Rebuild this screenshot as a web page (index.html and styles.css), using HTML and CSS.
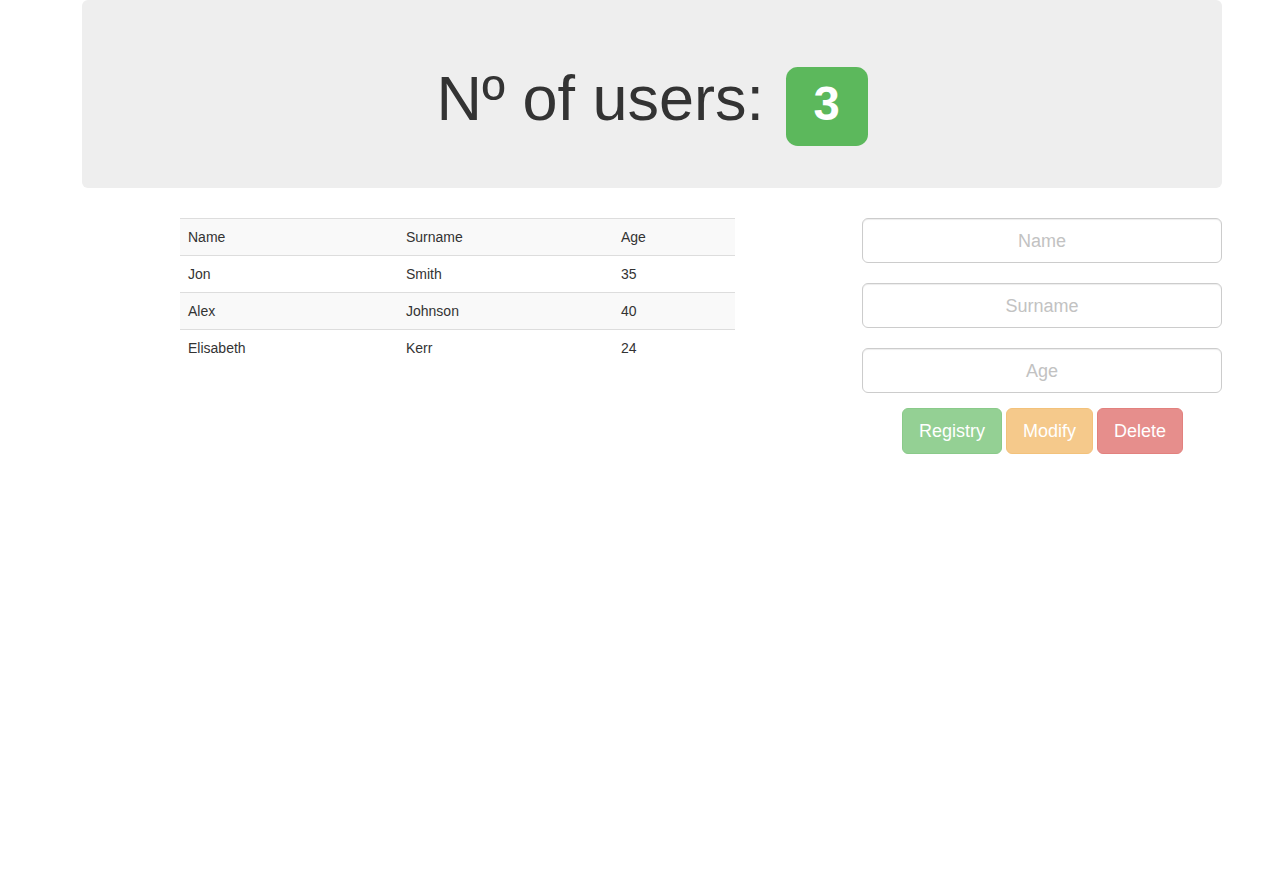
FILE: index.html
```html
<!DOCTYPE html>
<html>
<head>
<meta charset="utf-8">
<link rel="stylesheet" href="styles.css">
</head>
<body>
<div class="page">
  <div class="jumbotron">
    <h1 class="title">Nº of users: <span class="label">3</span></h1>
  </div>
  <div class="row">
    <div class="col-table">
      <table class="table">
        <tbody>
          <tr><td class="c1">Name</td><td class="c2">Surname</td><td class="c3">Age</td></tr>
          <tr><td>Jon</td><td>Smith</td><td>35</td></tr>
          <tr><td>Alex</td><td>Johnson</td><td>40</td></tr>
          <tr><td>Elisabeth</td><td>Kerr</td><td>24</td></tr>
        </tbody>
      </table>
    </div>
    <div class="col-form">
      <input class="input" type="text" placeholder="Name">
      <input class="input" type="text" placeholder="Surname">
      <input class="input" type="text" placeholder="Age">
      <div class="buttons">
        <button class="btn btn-success">Registry</button>
        <button class="btn btn-warning">Modify</button>
        <button class="btn btn-danger">Delete</button>
      </div>
    </div>
  </div>
</div>
</body>
</html>
```

FILE: styles.css
```css
* { box-sizing: border-box; }
html, body { margin: 0; padding: 0; background: #fff; }
body {
  font-family: "Liberation Sans", Arial, sans-serif;
  font-size: 14px;
  line-height: 1.42857;
  color: #333;
}
.page {
  width: 1140px;
  margin-left: 82px;
}
.jumbotron {
  background: #eee;
  border-radius: 6px;
  height: 188px;
  padding: 48px 60px 0;
  margin-bottom: 30px;
  text-align: center;
}
.title {
  margin: 16px 0 0;
  font-size: 63px;
  line-height: 1.1;
  font-weight: 500;
  color: #333;
}
.label {
  display: inline;
  font-size: 75%;
  font-weight: bold;
  line-height: 1;
  color: #fff;
  background: #5cb85c;
  padding: .22em .59em .34em;
  border-radius: .25em;
  vertical-align: baseline;
  margin-left: 4px;
}
.row {
  display: flex;
}
.col-table {
  width: 555px;
  margin-left: 98px;
}
.col-form {
  width: 360px;
  margin-left: 127px;
  display: flex;
  flex-direction: column;
  gap: 20px;
}
.table {
  width: 555px;
  border-collapse: collapse;
  border-spacing: 0;
}
.table td {
  padding: 8px;
  line-height: 20px;
  border-top: 1px solid #ddd;
  text-align: left;
  vertical-align: top;
}
.table tr:nth-child(odd) td { background: #f9f9f9; }
.c1 { width: 218px; }
.c2 { width: 215px; }
.c3 { width: 122px; }
.input {
  display: block;
  width: 360px;
  height: 45px;
  padding: 11px 16px 9px;
  font-family: "Liberation Sans", Arial, sans-serif;
  font-size: 18px;
  line-height: 1.3333;
  color: #555;
  background: #fff;
  border: 1px solid #ccc;
  border-radius: 6px;
  text-align: center;
  box-shadow: inset 0 1px 1px rgba(0,0,0,.075);
  margin: 0;
}
.input::placeholder { color: #c2c2c2; }
.buttons {
  display: flex;
  justify-content: center;
  gap: 4px;
  margin-top: -5px;
  padding-left: 1px;
}
.btn {
  font-family: "Liberation Sans", Arial, sans-serif;
  font-size: 18px;
  line-height: 1.3333;
  padding: 11px 16px 9px;
  height: 46px;
  border: 1px solid transparent;
  border-radius: 6px;
  color: #fff;
  opacity: .65;
  cursor: not-allowed;
}
.btn-success { background: #5cb85c; border-color: #4cae4c; }
.btn-warning { background: #f0ad4e; border-color: #eea236; }
.btn-danger { background: #d9534f; border-color: #d43f3a; }
```
